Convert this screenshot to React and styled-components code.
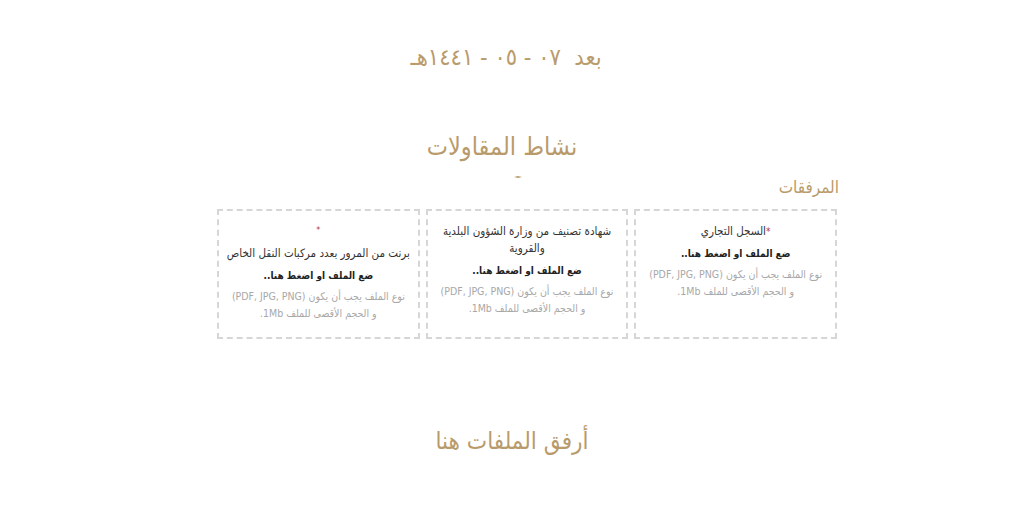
import React from 'react';
import styled, { createGlobalStyle } from 'styled-components';

const gold = '#b99b6b';

const GlobalStyle = createGlobalStyle`
  html, body {
    margin: 0;
    padding: 0;
    background: #ffffff;
  }
  body {
    font-family: "DejaVu Sans Condensed", "DejaVu Sans", sans-serif;
    font-stretch: semi-condensed;
  }
`

const Page = styled.div`
  width: 1024px;
  height: 517px;
  display: flex;
  flex-direction: column;
  align-items: center;
  direction: rtl;
  overflow: hidden;
`

const DateLine = styled.h2`
  margin: 40px 12px 0 0;
  font-size: 23.5px;
  font-weight: normal;
  color: ${gold};
  line-height: 34px;
  white-space: pre;
`

const Title = styled.h1`
  margin: 55px 20px 0 0;
  font-size: 25px;
  font-weight: normal;
  color: ${gold};
  line-height: 36px;
`

const Divider = styled.div`
  width: 8px;
  height: 2px;
  margin-top: 11px;
  margin-left: 12px;
  background: linear-gradient(90deg, transparent, ${gold}, transparent);
`

const Section = styled.section`
  width: 620px;
  margin-left: 30px;
  display: flex;
  flex-direction: column;
  align-items: stretch;
`

const Label = styled.div`
  font-size: 17px;
  color: ${gold};
  line-height: 18px;
  margin-bottom: 13px;
  margin-right: -2px;
`

const Cards = styled.div`
  display: grid;
  grid-template-columns: repeat(3, 1fr);
  gap: 6px;
`

const Card = styled.div`
  height: 130px;
  box-sizing: border-box;
  border: 2px dashed #d6d6d6;
  display: flex;
  flex-direction: column;
  align-items: center;
  justify-content: flex-start;
  text-align: center;
  padding: 12px 4px 0;
`

const Star = styled.span`
  color: #b53b3b;
  font-size: ${p => (p.alone ? '9px' : '10px')};
  line-height: ${p => (p.alone ? '14px' : '1')};
  margin-bottom: ${p => (p.alone ? '8px' : '0')};
`

const CardTitle = styled.div`
  font-size: 11.5px;
  color: #333;
  line-height: 17px;
  margin-bottom: 5px;
`

const Drop = styled.div`
  font-size: 10px;
  color: #222;
  font-weight: bold;
  line-height: 18px;
  margin-bottom: 3px;
`

const Hint = styled.div`
  font-size: 10.5px;
  color: #a8a8a8;
  line-height: 17px;
`

const Attach = styled.h2`
  margin: 86px 0 0;
  font-size: 24px;
  font-weight: normal;
  color: ${gold};
  line-height: 32px;
`

const hint = (
  <Hint>
    نوع الملف يجب أن يكون (PDF, JPG, PNG)
    <br />
    و الحجم الأقصى للملف 1Mb.
  </Hint>
);

export default function App() {
  return (
    <>
      <GlobalStyle />
      <Page>
        <DateLine>{'بعد  ٠٧ - ٠٥ - ١٤٤١هـ'}</DateLine>
        <Title>نشاط المقاولات</Title>
        <Divider />
        <Section>
          <Label>المرفقات</Label>
          <Cards>
            <Card>
              <CardTitle><Star>*</Star>السجل التجاري</CardTitle>
              <Drop>ضع الملف او اضغط هنا..</Drop>
              {hint}
            </Card>
            <Card>
              <CardTitle>شهادة تصنيف من وزارة الشؤون البلدية<br />والقروية</CardTitle>
              <Drop>ضع الملف او اضغط هنا..</Drop>
              {hint}
            </Card>
            <Card>
              <Star alone>*</Star>
              <CardTitle>برنت من المرور بعدد مركبات النقل الخاص</CardTitle>
              <Drop>ضع الملف او اضغط هنا..</Drop>
              {hint}
            </Card>
          </Cards>
        </Section>
        <Attach>أرفق الملفات هنا</Attach>
      </Page>
    </>
  );
}
